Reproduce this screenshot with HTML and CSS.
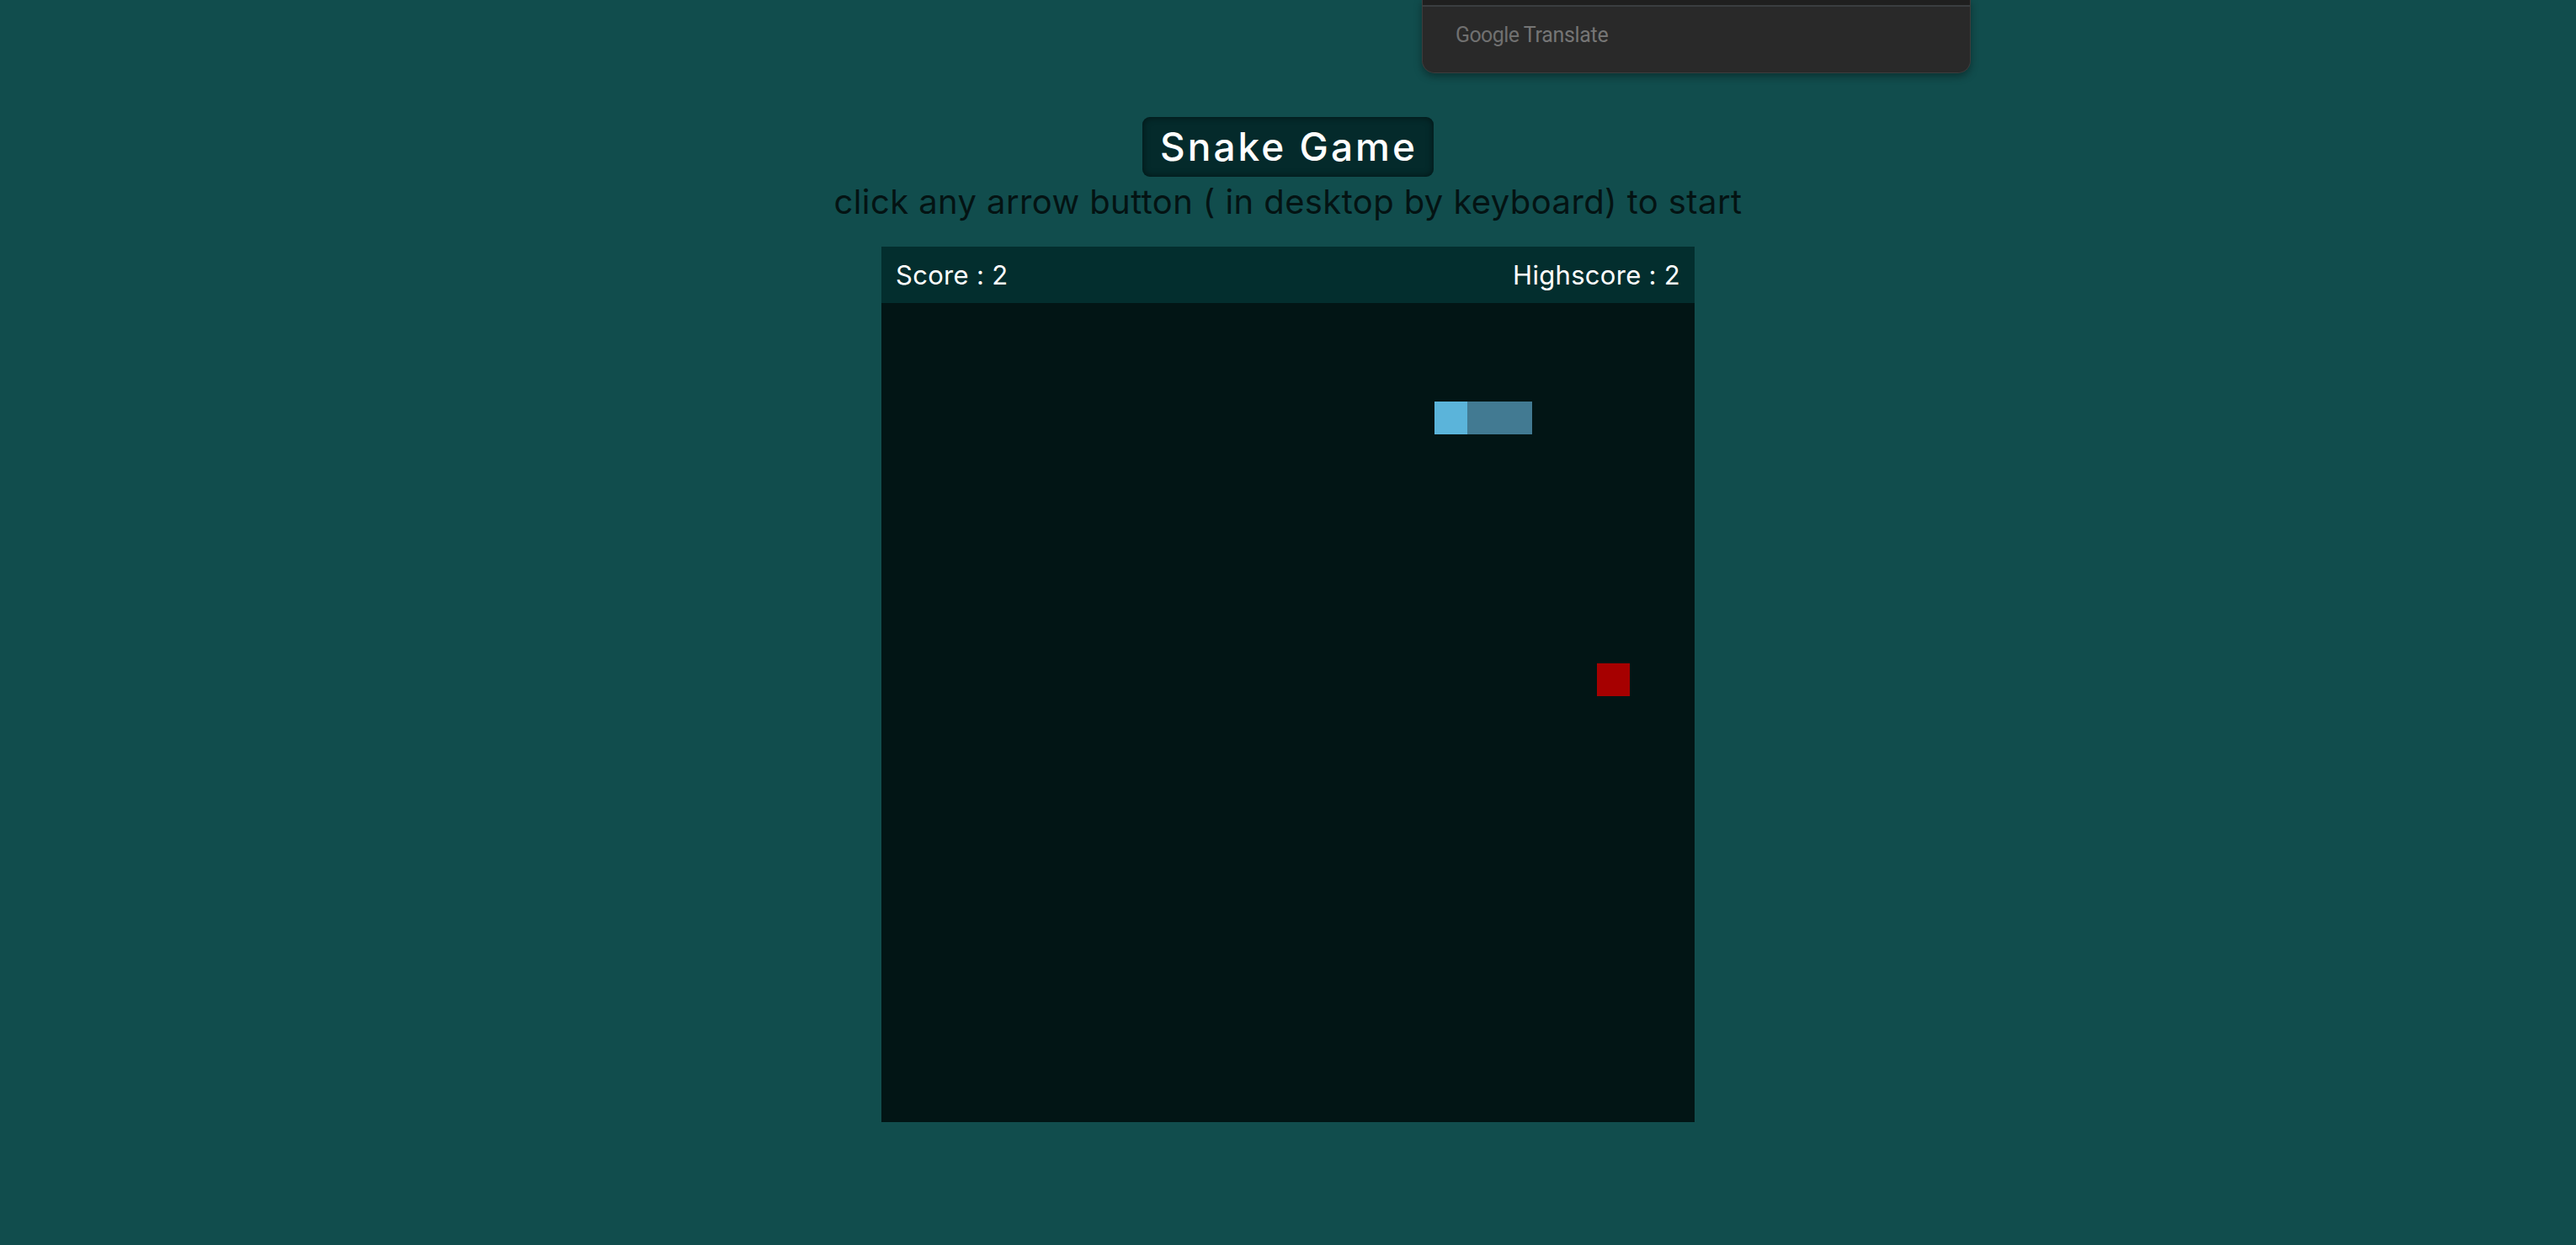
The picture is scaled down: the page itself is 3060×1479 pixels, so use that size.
FILE: index.html
```html
<!DOCTYPE html>
<html lang="en">
<head>
<meta charset="utf-8">
<title>Snake Game</title>
<link rel="stylesheet" href="styles.css">
</head>
<body>
  <div class="translate-pop">
    <div class="translate-top"></div>
    <div class="translate-foot"><span class="g-logo">Google</span> <span class="g-word">Translate</span></div>
  </div>

  <main class="page">
    <h1 class="title">Snake Game</h1>
    <p class="hint">click any arrow button ( in desktop by keyboard) to start</p>

    <section class="board">
      <header class="scorebar">
        <span class="score">Score : 2</span>
        <span class="score">Highscore : 2</span>
      </header>
      <div class="field">
        <div class="cell head" style="grid-area: 4 / 18"></div>
        <div class="cell body" style="grid-area: 4 / 19"></div>
        <div class="cell body" style="grid-area: 4 / 20"></div>
        <div class="cell food" style="grid-area: 12 / 23"></div>
      </div>
    </section>
  </main>
</body>
</html>
```

FILE: styles.css
```css
html, body {
  margin: 0;
  padding: 0;
}

body {
  background: #114d4d;
  min-height: 1479px;
  font-family: "Inter", "Noto Sans", sans-serif;
  position: relative;
  overflow: hidden;
}

.translate-pop {
  position: absolute;
  left: 1689px;
  top: -1px;
  width: 652px;
  height: 88px;
  background: #292929;
  border: 1px solid #3d3d3d;
  border-top: none;
  border-radius: 0 0 15px 15px;
  box-shadow: 0 4px 10px rgba(0, 0, 0, 0.35);
  box-sizing: border-box;
  display: flex;
  flex-direction: column;
}

.translate-top {
  height: 7px;
  background: #1f1f1f;
  border-bottom: 2px solid #3a3d40;
}

.translate-foot {
  padding-left: 39px;
  padding-top: 19px;
  font-family: "Roboto", "Liberation Sans", sans-serif;
  font-size: 25px;
  line-height: 30px;
  color: #727272;
  letter-spacing: -0.3px;
}

.g-logo {
  color: #707070;
  letter-spacing: -0.6px;
}

.g-word {
  color: #757575;
}

.page {
  display: flex;
  flex-direction: column;
  align-items: center;
  padding-top: 139px;
}

.title {
  margin: 0;
  height: 71px;
  box-sizing: border-box;
  padding: 0 19px 0 21px;
  background: #042a2b;
  border-radius: 9px;
  box-shadow: inset 0 0 8px rgba(0, 0, 0, 0.55);
  color: #ffffff;
  font-weight: 500;
  font-size: 46px;
  line-height: 71px;
  letter-spacing: 3px;
}

.hint {
  margin: 0;
  color: #041313;
  font-size: 40px;
  line-height: 60px;
  font-weight: 400;
  letter-spacing: 0.4px;
}

.board {
  margin-top: 23px;
  width: 966px;
  display: flex;
  flex-direction: column;
}

.scorebar {
  height: 67px;
  background: #032e2e;
  display: flex;
  justify-content: space-between;
  align-items: center;
  padding: 0 17px 0 17px;
  color: #ffffff;
  font-size: 31px;
  letter-spacing: 0.3px;
}

.field {
  height: 973px;
  background: #021515;
  display: grid;
  grid-template-columns: repeat(25, 1fr);
  grid-template-rows: repeat(25, 1fr);
}

.head {
  background: #5bb4da;
}

.body {
  background: #427a92;
}

.food {
  background: #a60000;
}
```
